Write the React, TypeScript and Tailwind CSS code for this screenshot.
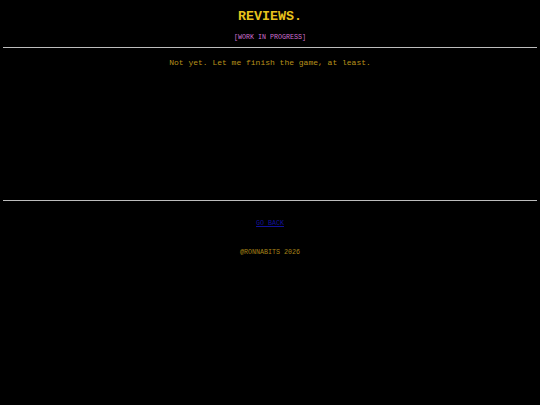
export default function App() {
  return (
    <div
      className="min-h-[405px] w-full bg-black text-center"
      style={{ fontFamily: '"Liberation Mono", "Courier New", monospace' }}
    >
      <div className="px-[3px]">
        {/* header */}
        <h1 className="pt-[9px] text-[13.33px] leading-[16px] font-bold text-[#e8c21c]">
          REVIEWS.
        </h1>
        <p className="mt-[8px] text-[6.67px] leading-[8px] text-[#d070d0]">
          [WORK IN PROGRESS]
        </p>

        <div className="mt-[6px] h-px bg-[#bdbdbd]" />

        {/* content */}
        <div className="h-[152px] pt-[10px]">
          <p className="text-[8px] leading-[10px] text-[#b8921a]">
            Not yet. Let me finish the game, at least.
          </p>
        </div>

        <div className="h-px bg-[#bdbdbd]" />

        {/* footer */}
        <div className="mt-[18px] text-[6.67px] leading-[8px]">
          <a href="#" className="text-[#12129a] underline">
            GO BACK
          </a>
        </div>
        <p className="mt-[21px] text-[6.67px] leading-[8px] text-[#a88418]">
          @RONNABITS 2026
        </p>
      </div>
    </div>
  );
}
